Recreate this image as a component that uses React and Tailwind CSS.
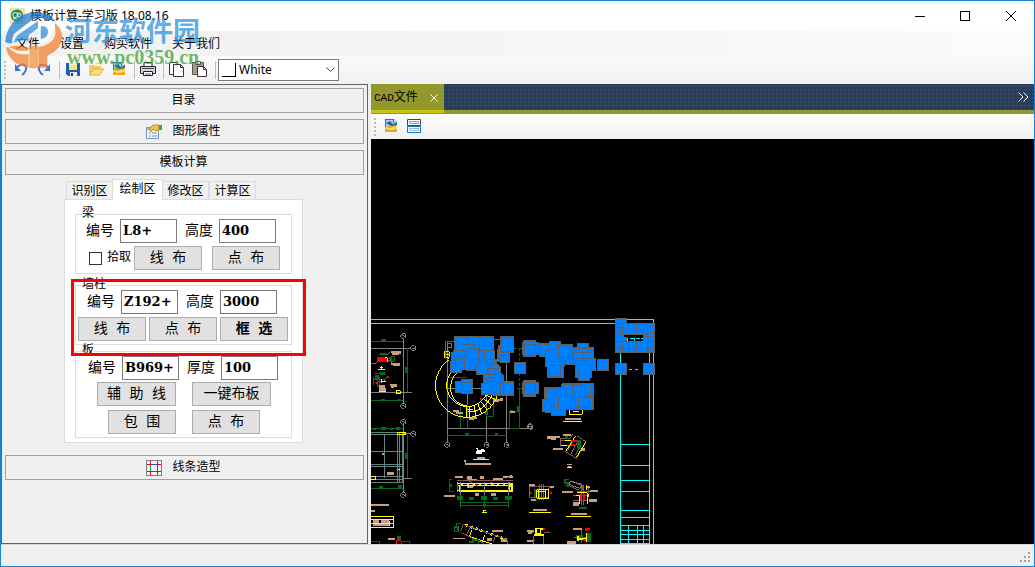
import { useState } from "react";

const menus = ["文件", "设置", "购买软件", "关于我们"];
const tabs = ["识别区", "绘制区", "修改区", "计算区"];

const BLUE = "#007fff";
const EDGE = "#5f5f5f";

// [x, y, w, h]
const columnsLeft = [
  [242, 155, 32, 32], [246, 128, 34, 34], [253, 79, 34, 34],
  [304, 79, 34, 34], [338, 79, 33, 34], [292, 81, 36, 34],
  [336, 84, 34, 60], [282, 104, 34, 34], [250, 121, 36, 32],
  [256, 146, 34, 34], [328, 108, 38, 34], [285, 136, 30, 44],
  [298, 146, 32, 34], [325, 121, 22, 34], [292, 115, 34, 35],
  [345, 123, 30, 32], [352, 150, 22, 34], [360, 163, 26, 34],
  [356, 176, 36, 34], [352, 190, 42, 34], [340, 195, 36, 34],
  [362, 204, 38, 34], [340, 206, 30, 34], [344, 214, 34, 36],
  [336, 222, 34, 28], [370, 222, 34, 34], [378, 232, 30, 22],
  [320, 160, 33, 34], [404, 215, 27, 41], [383, 120, 35, 34],
  [386, 106, 34, 38], [391, 79, 40, 50], [397, 95, 33, 34],
  [398, 82, 32, 36], [256, 214, 30, 34], [274, 208, 33, 43],
  [274, 217, 33, 27], [434, 157, 30, 33],
];

const columnsRight = [
  [0, 138, 28, 20], [0, 79, 41, 50], [6, 82, 34, 44],
  [0, 214, 18, 42], [12, 218, 29, 36],
  [43, 157, 34, 33],
  [67, 97, 48, 36], [72, 91, 36, 48], [75, 104, 32, 34],
  [67, 217, 48, 34], [72, 211, 36, 48], [75, 219, 32, 34],
  [112, 100, 34, 34], [118, 105, 34, 34], [148, 94, 34, 34],
  [136, 122, 34, 34], [150, 120, 34, 46], [138, 156, 56, 14],
  [184, 118, 36, 38], [196, 130, 24, 34], [168, 103, 50, 40],
  [142, 168, 48, 34], [148, 166, 34, 34], [175, 106, 34, 36],
  [232, 100, 34, 34], [220, 112, 60, 38], [220, 126, 34, 38],
  [252, 122, 28, 34], [226, 115, 48, 14], [250, 145, 36, 38],
  [228, 146, 28, 34], [226, 168, 50, 34], [235, 178, 34, 33],
  [292, 148, 34, 33],
  [133, 232, 40, 34], [139, 235, 34, 34], [187, 220, 34, 34],
  [184, 223, 50, 34], [222, 223, 24, 34], [246, 226, 34, 34],
  [257, 226, 14, 34], [127, 268, 34, 38], [136, 274, 34, 34],
  [154, 283, 42, 34], [160, 256, 34, 34], [210, 262, 34, 36],
  [238, 265, 40, 34], [216, 270, 20, 28], [228, 258, 24, 32],
  [236, 264, 34, 28], [176, 258, 34, 42], [190, 224, 28, 34],
];

const columnsFrame = [
  [346, 25, 34, 34], [346, 40, 34, 14], [346, 54, 26, 14],
  [346, 68, 26, 14], [346, 82, 34, 34], [346, 95, 26, 32],
  [346, 117, 26, 10], [436, 40, 27, 30], [430, 68, 33, 14],
  [430, 80, 33, 16], [436, 94, 27, 33], [446, 115, 17, 12],
  [367, 40, 22, 34], [389, 40, 20, 34], [409, 40, 33, 34],
  [367, 94, 22, 33], [389, 94, 20, 33], [409, 94, 33, 33],
  [346, 160, 34, 33], [430, 160, 33, 33],
];

function Columns({ items, back }) {
  return (
    <g fill={BLUE} stroke={EDGE} strokeWidth="3">
      {back && <path d={back} />}
      {items.map(([x, y, w, h], i) => (
        <rect key={i} x={x} y={y} width={w} height={h} />
      ))}
    </g>
  );
}

function Axis({ x, y }) {
  return (
    <g fill="none" stroke="#808080" strokeWidth="3">
      <path d={`M${x - 7} ${y - 4}l4-4h6l4 4v7l-4 4h-6l-4-4z`} />
      <path d={`M${x - 3} ${y}h6v3`} />
    </g>
  );
}

function Drawing() {
  return (
    <svg
      width="663"
      height="405"
      viewBox="371 139 663 405"
      shapeRendering="crispEdges"
      className="block shrink-0"
      aria-label="CAD"
    >
      {/* sheet frame */}
      <g fill="none" stroke="#00ffff">
        <path d="M371 319.5H653.5V544M371 323.5H649.5V544M620.5 323V544" />
        <path d="M620 444.5h29M620 465.5h29M620 480.5h29M620 491.5h29M620 510.5h29M620 517.5h29M620 525.5h29M620 530.5h29M620 534.5h29M620 539.5h29M620 543.5h29M628.5 525v19M637.5 525v19M643.5 525v19" />
        <path d="M629 369.5h12" strokeDasharray="3 3" />
      </g>

      {/* upper left detail and round stair */}
      <g transform="translate(370 310) scale(.33333)" fill="none" strokeWidth="3">
        <g stroke="#808080">
          <path d="M100 83V282M3 115H122M3 247H125M100 340V360M232 95V360M232 235H410M292 235V285M350 235V355M409 250V360M232 355H450" />
        </g>
        <g stroke="#066b1e">
          <path d="M3 94H100M112 115V247M3 271H100M292 203H232M271 290V355H292V290M350 290V320H371V278M420 304V360M430 304h20M26 133h28M22 150h6M12 190h35M20 208h26M12 200v25M62 140h12v16h-14" />
        </g>
        <g fill="#066b1e">
          <path d="M34 88h14v7h-14zM106 170h7v18h-7zM34 266h12v6h-12zM84 266h8v6h-8zM268 305h5v16h-5zM346 304h7v12h-7zM420 300h10v6h-10z" />
          <path d="M30 128h20v8H30zM56 140h10v12H56zM14 194h12v12H14zM30 186h14v8H30z" />
        </g>
        <path d="M22 141h32v14H22z" fill="#ff0000" />
        <path d="M8 208h14v6h10M14 218h10v10M30 200v28" stroke="#ff0000" />
        <path d="M3 160h15l8-10M50 135l10-8M55 150l12 10M40 214l12-14M30 236l-12-18" stroke="#85595f" />
        <g fill="#c8a080">
          <path d="M62 123h30v9h-6v3H66v-6h-4zM62 160h28v9H68v-5h-6zM60 223h20v7h-8v4h-8v-5h-4zM28 225h16v10h4v9H26v-8z" />
          <path d="M370 267h30v5h-14v4h-16zM296 322h26v5h-10v3h-16zM250 301h16v5h12v5h-20v-6h-8zM420 302h16v8h-16z" />
        </g>
        <g stroke="#ffff00">
          <path d="M24 180h22M34 168v12M30 174h10M36 214h12M28 244h20M36 206v12M44 144h8v12" />
          <path d="M79 242h12v10H79zM223 125h15v10h-15zM223 134h15v8h-15zM236 140v8" />
          <path d="M236 150A95 95 0 0 0 290 322A95 95 0 0 0 382 256" />
          <path d="M244 186A64 64 0 0 0 290 290A64 64 0 0 0 350 252M262 188C238 204 232 258 264 278Q276 286 290 288" />
          <path d="M290 288v34M300 290v32M312 288l6 32M324 282l12 30M334 276l18 24M342 266l22 20M348 256l28 12M294 306q50 0 72-50M348 254h34M290 300h20" />
        </g>
        <path d="M226 94v50M232 94h30M360 90h34" stroke="#85595f" />
        <path d="M232 100h14v14h-14" stroke="#55807a" />
        <path d="M330 265h5v5h-5zM52 198h5v5h-5z" fill="#ff0000" stroke="none" />
        <Axis x={100} y={78} />
        <Axis x={130} y={115} />
        <Axis x={100} y={288} />
        <Axis x={100} y={336} />
        <Columns
          items={columnsLeft}
          back="M253 79H371V150H380V170H392V195H400V254H336V226H342V194H322V182H290V178H272V186H242V155H246V128H253z"
        />
      </g>

      {/* plan on the right of the stair */}
      <g transform="translate(500 310) scale(.33333)" fill="none" strokeWidth="3">
        <path d="M19 160V360M28 355H84" stroke="#808080" />
        <path d="M41 115h26M58 115v42" stroke="#066b1e" strokeDasharray="9 6" />
        <path d="M58 190v45" stroke="#066b1e" strokeDasharray="9 6" />
        <path d="M58 235V355H30M51 235h8" stroke="#066b1e" />
        <path d="M51 288h6v14h-6z" fill="#066b1e" />
        <path d="M62 115h6M62 235h6" stroke="#808080" />
        <path d="M0 265h10v5H0zM194 324h48v5h-48z" fill="#c8a080" />
        <path d="M208 300v13h39v-13M218 304h20M190 334h56" stroke="#ffff00" />
        <path d="M382 94v-9h48v9M403 85v9" stroke="#00ffff" strokeDasharray="12 5" />
        <Axis x={91} y={350} />
        <Columns
          items={columnsRight}
          back="M112 100H148V94H182V103H218V156H194V170H138V138H118zM220 112H280V146H286V183H228V164H220zM133 232H187V222H281V298H196V316H154V306H127V268H133z"
        />
        <Columns items={columnsFrame} />
      </g>

      {/* lower left plan, section and notes */}
      <g transform="translate(370 425) scale(.33333)" fill="none" strokeWidth="3">
        <path d="M3 22h98M3 28h98M3 80h98M3 118h98M3 124h98M3 155h98M3 165h98M3 174h98M43 28v130M82 22v150M88 22v150M97 22v150" stroke="#608580" />
        <path d="M100 0V204M101 27H122M101 160H126M232 0V54M350 0V54M410 0V54M232 10H450" stroke="#808080" />
        <path d="M3 12H100M112 30V160M3 192H100M232 31H410M416 10h34M246 165h-8v36h14M271 210V248M343 210V248M415 210V248M271 234H415M271 243H415" stroke="#066b1e" />
        <g fill="#066b1e">
          <path d="M8 8h10v8H8zM34 6h14v9H34zM60 8h10v8H60zM78 6h12v9H78zM106 84h7v18h-7zM28 184h12v8H28zM84 180h12v12H84zM286 24h11v7h-11zM374 24h11v7h-11z" />
          <path d="M262 214h18v10h-18zM298 216h14v8h-14zM334 214h18v10h-18zM370 216h14v8h-14zM406 214h18v10h-18zM338 237h10v7h-10zM238 176h8v10h-8zM80 333h14v14H80z" />
        </g>
        <path d="M84 22h22v8H84zM84 134h6M3 154h14v10H3M340 255v7M337 262h14M340 258h8" stroke="#ffff00" />
        <path d="M310 103h46M3 274h68v33H3M3 284h68M3 296h68" stroke="#ffff00" />
        <path d="M10 290h50M10 301h50" stroke="#ffff00" strokeWidth="6" strokeDasharray="4 8" />
        <path d="M318 70h7v5h8v-4h8v5h4v4h-8v6h-18v-8h4z" fill="#ffffff" />
        <g fill="#c8a080">
          <path d="M320 95h26v6h-26zM282 106h5v8h76v6h-76zM52 142h20v7h-20zM3 236h54v6H3zM3 255h12v6H3zM8 286h20v8H8zM34 286h24v8H34zM10 298h48v6H10zM36 84h7v7h-7z" />
          <path d="M222 211h34v6h-34zM256 154h22v6h-22zM292 154h14v8h14v6h-28zM330 154h12v8h-12zM370 158h28v6h-28zM400 154h28v5h-28zM290 184h20v6h-20zM314 204h14v8h-14zM362 204h16v8h-16z" />
          <path d="M54 338h22v8H54zM366 316h32v6h-32zM250 338h34v5h-34zM352 340h14v8h-14zM392 340h18v12h-18z" />
        </g>
        <path d="M260 166h170M262 172v30M300 166l10 20M360 170l20 14M420 172v30M290 160l10 12" stroke="#85595f" />
        <path d="M260 177h170M264 182h160M262 198h164M268 184v16M420 180v20M292 198v4M268 201h152" stroke="#ffff00" />
        <path d="M272 180h150" stroke="#ffff00" strokeWidth="7" strokeDasharray="8 10" />
        <path d="M343 172v38M271 172v38M415 172v38" stroke="#808080" />
        <path d="M412 155h4v4h-4zM404 215h4v4h-4zM318 178h4v4h-4z" fill="#ff0000" />
        <path d="M278 298L412 344M306 314l-8 20 90 30M344 330l-8 24" stroke="#ffff00" />
        <path d="M286 300L400 340" stroke="#ffff00" strokeWidth="8" strokeDasharray="7 9" />
        <path d="M272 318l8-20 132 46v12M272 322l70 34M300 310l-10 20M376 332l-6 20" stroke="#85595f" />
        <path d="M272 296h-12v10h-6v14h10v-16M296 352h14v-6h16v10" stroke="#066b1e" strokeWidth="5" />
        <path d="M79 356v-9h15v9M3 350h20" stroke="#ff0000" />
        <path d="M3 350h26v8M94 349h25v8" stroke="#066b1e" />
        <Axis x={130} y={27} />
        <Axis x={100} y={210} />
        <Axis x={232} y={60} />
        <Axis x={350} y={60} />
        <Axis x={410} y={60} />
      </g>

      {/* node details */}
      <g transform="translate(510 425) scale(.33333)" fill="none" strokeWidth="3">
        <path d="M0 10h30M30 0v10" stroke="#066b1e" />
        <path d="M30 10h24" stroke="#808080" />
        <g stroke="#85595f">
          <path d="M150 40h30l8-12M150 48h36M152 40v22h30M200 32l28 18-28 50-34-20M192 42l-20 36M204 48l-22 40M214 56l-18 34" />
          <path d="M60 184h56M62 218h54M90 176v50M96 176v50M102 176v50M116 190v30M60 182v36" />
          <path d="M182 168l36 14v14M178 182l30 14M216 180v60M222 180v60M190 212h40M190 228h40M236 184v20M200 200h50" />
          <path d="M72 332v26M101 332v26M60 322h12M101 322h18M192 338h36M216 310v44M60 346h14" />
        </g>
        <g fill="#c8a080">
          <path d="M111 34h38v5h-10v7h-16v-4h-12zM160 27h22v6h-22zM130 68h30v7h-30zM214 70h12v7h-12zM172 116h14v5h-14zM174 122h10v5h-10z" />
          <path d="M56 178h20v6H56zM62 222h16v7H62zM120 184h12v4h-12zM68 253h42v5H68zM156 198h34v6h-34zM228 184h12v6h-12zM236 222h26v10h-26zM190 232h18v10h-18zM240 194h24v6h-24zM184 264h46v6h-46z" />
          <path d="M52 314h20v8H52zM54 318h12v8H54zM52 344h18v6H52zM190 308h26v8h-26zM172 348h26v8h-26zM0 150h6v8H0z" />
        </g>
        <path d="M164 34h10v8h-10zM200 46h12v26h-12zM72 192h8v24h-8zM206 245h26v7h-26zM228 324h14v26h-14zM198 330h20v12h-20zM0 212h6v10H0z" fill="#066b1e" />
        <path d="M178 164h-12v10h8v12M166 182h10" stroke="#066b1e" strokeWidth="5" />
        <path d="M182 168l34 10-6 12-34-12z" stroke="#808080" />
        <path d="M196 34l-28 44M228 50l-28 46M164 46h26M152 62h20M170 127h16M80 194h36v26H80zM86 194v26M108 194v26M82 200h26M57 262h66M168 274h74M230 180v14M200 204h32v34M198 212h12v26M236 208v8" stroke="#ffff00" />
        <path d="M72 330h30M78 310h14v16H78zM94 312h8M202 342h28M230 324v28M204 334v14M0 180h10M0 184h6v16H0" stroke="#ffff00" strokeWidth="4" />
        <path d="M182 48h20M184 61h12M212 206v20M222 206v20M120 204h6M60 204h6M116 186h5M98 312h6M218 346h10M228 310v8M232 312h8" stroke="#ff0000" strokeWidth="5" />
        <Axis x={62} y={6} />
      </g>
    </svg>
  );
}

const Grip = () => (
  <span className="ml-[3px] mr-px flex w-1 shrink-0 flex-col gap-0.5 self-center">
    {[0, 1, 2, 3, 4].map((n) => (
      <i key={n} className="size-0.5 bg-[#bdbdbd]" />
    ))}
  </span>
);

const Sep = () => (
  <span className="ml-1 mr-px h-[18px] w-px shrink-0 self-center bg-[#bdbdbd]" />
);

function ToolButton({ label, children }) {
  return (
    <button aria-label={label} className="flex h-6 w-[23px] shrink-0 items-center justify-center pb-px">
      <svg width="16" height="16" viewBox="0 0 16 16" fill="none">
        {children}
      </svg>
    </button>
  );
}

const PictureIcon = () => (
  <>
    <path d="M2 1h9l3 3v10H2z" fill="#3b6ea5" />
    <path d="M3 2h7v3l3-1v3L8 8 3 9z" fill="#a9d3f2" />
    <path d="M3 5l4-2 3 3 3-1v3L8 8z" fill="#2a62a0" />
    <path d="M2 9l5-1 7-1v7H2z" fill="#e8a91c" />
    <path d="M2 9l5 1 7-2v3l-6 1-6-1z" fill="#fbdc62" />
    <path d="M11 1v3h3z" fill="#d8e9f8" />
  </>
);

function Bar({ children }) {
  return (
    <button className="flex h-[25px] w-full shrink-0 items-center justify-center gap-2.5 border border-[#a0a0a0] bg-[#f0f0f0] pr-0.5 text-xs">
      {children}
    </button>
  );
}

function Field({ id, label, value }) {
  return (
    <>
      <label htmlFor={id} className="mr-1.5 text-sm">
        {label}
      </label>
      <input
        id={id}
        defaultValue={value}
        className="h-6 w-[57px] border border-[#7a7a7a] bg-white pb-px pl-0.5 font-['DejaVu_Serif','Noto_Sans_CJK_SC',serif] text-[13px] font-bold outline-none"
      />
    </>
  );
}

function Push({ wide, bold, children }) {
  return (
    <button
      className={`h-6 border border-[#adadad] bg-[#e1e1e1] text-sm leading-none whitespace-nowrap ${
        wide ? "w-[79px]" : "w-[68px]"
      } ${bold ? "font-bold" : ""}`}
    >
      {children}
    </button>
  );
}

function Group({ title, className, children }) {
  return (
    <fieldset className={`mx-2.5 border border-[#dcdcdc] pb-[3px] ${className}`}>
      <legend className="ml-1.5 h-2.5 text-xs leading-[10px]">{title}</legend>
      {children}
    </fieldset>
  );
}

function Watermark() {
  return (
    <div className="pointer-events-none absolute left-1 top-2.5 flex opacity-75">
      <svg width="58" height="58" viewBox="15 30 174 174" className="shrink-0">
        <path d="M16 124C18 76 56 34 104 34c32 0 54 12 64 30-12-8-22-10-32-8-12-8-30-6-44 4L42 98c-4 8-6 18-6 30z" fill="#1f7fd0" />
        <path d="M42 126c2-14 8-22 20-30l52-36v22l-28 20v18c-14-4-30-2-44 6z" fill="#3391dd" />
        <path d="M114 66c22-6 40 2 42 24 0 20-14 34-40 38V84z" fill="#fff" />
        <path d="M122 76c14-2 22 4 22 16s-8 20-22 22z" fill="#3391dd" />
        <path d="M164 66c18 12 26 32 20 56-8 24-26 34-42 42v36h-26v-62c34-6 52-24 50-48-1-10-1-16-2-24z" fill="#f08430" />
        <path d="M18 140c18-8 44-8 68 0v60C50 194 24 174 18 140z" fill="#f08430" />
        <path d="M22 134c20 16 46 20 68 12v12c-28 6-52-2-68-24z" fill="#fff" />
        <path d="M88 134h28v66c-10 2-18 2-28 0z" fill="#f4933f" />
      </svg>
      <div className="pt-0.5 pl-0.5 font-bold">
        <div className="font-['Noto_Sans_CJK_SC',sans-serif] text-[27px] leading-[34px] text-[#2f95e0]">
          河东软件园
        </div>
        <div className="ml-0.5 font-['Liberation_Serif',serif] text-xl leading-5 text-[#3fa535]">
          www.pc0359.cn
        </div>
      </div>
    </div>
  );
}

export default function App() {
  const [tab, setTab] = useState("绘制区");

  return (
    <div className="relative flex min-h-screen flex-col border border-[#1883d7] bg-[#f0f0f0] font-['Noto_Sans','Noto_Sans_CJK_SC',sans-serif] text-xs text-black">
      <header className="flex h-[30px] shrink-0 items-center bg-white">
        <svg width="16" height="16" viewBox="0 0 16 16" className="ml-2 shrink-0">
          <path d="M1 0h15v13l-3 3H1z" fill="#efdfb8" />
          <circle cx="8" cy="7.500" r="6" fill="#178a4c" />
          <circle cx="6.500" cy="7" r="2.600" fill="none" stroke="#fff" />
          <circle cx="10" cy="7" r="2" fill="none" stroke="#fff" />
          <path d="M4 10q5 3 8 0" fill="none" stroke="#fff" />
        </svg>
        <h1 className="ml-[5px] flex-1 whitespace-nowrap">模板计算-学习版 18.08.16</h1>
        <button aria-label="最小化" className="flex h-full w-[45px] items-center justify-center">
          <i className="h-px w-2.5 bg-black" />
        </button>
        <button aria-label="最大化" className="flex h-full w-[46px] items-center justify-center">
          <i className="size-2.5 border border-black" />
        </button>
        <button aria-label="关闭" className="flex h-full w-[46px] items-center justify-center">
          <svg width="10" height="10" viewBox="0 0 10 10" stroke="#000">
            <path d="M0 0l10 10M10 0L0 10" />
          </svg>
        </button>
      </header>

      <nav className="flex h-[25px] shrink-0 items-center gap-5 bg-gradient-to-r from-[#f0f0f0] to-[#fbfbfb] pl-[15px]">
        {menus.map((m) => (
          <button key={m}>{m}</button>
        ))}
      </nav>

      <div className="flex h-7 shrink-0 items-center bg-gradient-to-b from-[#fbfbfb] to-[#f0f0f0] pb-px">
        <Grip />
        <ToolButton label="撤销">
          <path d="M4 6q7-5 9 0 1 4-4 8" stroke="#3f73d8" strokeWidth="2" />
          <path d="M2 3v7h6z" fill="#3f73d8" />
        </ToolButton>
        <ToolButton label="重做">
          <path d="M12 6Q5 1 3 6q-1 4 4 8" stroke="#3f73d8" strokeWidth="2" />
          <path d="M14 3v7H8z" fill="#3f73d8" />
        </ToolButton>
        <Sep />
        <ToolButton label="保存">
          <path d="M1 2h14v13H3l-2-2z" fill="#1f5fae" />
          <path d="M4 2h8v7H4z" fill="#f8e37a" />
          <path d="M4 2h8v2H4z" fill="#fdf6c4" />
          <path d="M5 11h7v4H5z" fill="#e8f1fa" />
          <path d="M6 12h2v3H6z" fill="#143f7a" />
        </ToolButton>
        <ToolButton label="打开">
          <path d="M1 14V4h5l1 1h6v3H5z" fill="#f2cc5c" />
          <path d="M1.500 14l4-6h10l-4 6z" fill="#fce08a" stroke="#e0a830" />
          <path d="M8 3l5-2v3" stroke="#e9b93c" />
        </ToolButton>
        <ToolButton label="图片">
          <PictureIcon />
        </ToolButton>
        <Sep />
        <ToolButton label="打印">
          <path d="M4 5.500V1.500h8v4" fill="#fff" stroke="#222" />
          <path d="M.5 5.500h15v7H.5z" fill="#d8d8d8" stroke="#222" />
          <path d="M2 7h12v1H2z" fill="#444" />
          <path d="M3.500 10.500h9v4h-9z" fill="#fff" stroke="#222" />
          <path d="M5 12h6v2H5z" fill="#8fb6e8" />
        </ToolButton>
        <Sep />
        <ToolButton label="复制">
          <path d="M.5 1.500h7l2 2v10h-9z" fill="#fff" stroke="#333" />
          <path d="M4.500 3.500h7l3 3v9h-10z" fill="#fff" stroke="#333" />
          <path d="M11.500 3.500v3h3" stroke="#333" />
        </ToolButton>
        <ToolButton label="粘贴">
          <path d="M.5 1.500h11v12H.5z" fill="#a89a86" stroke="#555" />
          <path d="M3.500.5h5v3h-5z" fill="#e8e8e8" stroke="#555" />
          <path d="M5.500 5.500h6l3 3v7h-9z" fill="#fff" stroke="#333" />
          <path d="M11.500 5.500v3h3" stroke="#333" />
        </ToolButton>
        <Sep />
        <div className="relative ml-px">
          <select
            aria-label="颜色"
            className="block h-[22px] w-[121px] appearance-none border border-[#7a7a7a] bg-white pl-5 text-xs outline-none"
          >
            <option>White</option>
          </select>
          <i className="absolute left-1 top-1 size-[14px] border-b border-r border-black bg-white" />
          <svg width="9" height="6" viewBox="0 0 9 6" className="absolute right-1 top-2" fill="none" stroke="#444">
            <path d="M.5.5l4 4 4-4" />
          </svg>
        </div>
      </div>

      <main className="flex flex-1 font-['Liberation_Mono','Noto_Sans_CJK_SC',monospace]">
        <aside className="flex w-[367px] shrink-0 flex-col gap-1.5 border border-[#646464] p-[3px]">
          <Bar>目录</Bar>
          <Bar>
            <svg width="16" height="16" viewBox="0 0 16 16">
              <path d="M.5 3.500h12v11H.5z" fill="#f4f8ff" stroke="#7c93bd" />
              <path d="M1 4h11v2H1z" fill="#9db7e4" />
              <path d="M3 9h2M6 9h5M3 12h2M6 12h5" stroke="#6f88b8" />
              <path d="M3 5l4-4 6 0v5L9 7 7 5 5 8z" fill="#f0c040" stroke="#8a6a20" strokeWidth=".6" />
              <path d="M13 1h3v5h-3z" fill="#4d9a52" />
            </svg>
            图形属性
          </Bar>
          <Bar>模板计算</Bar>

          <div className="-mt-0.5 flex justify-center pr-0.5">
            <section className="relative w-[239px]">
              <div role="tablist" className="flex h-5 items-end pl-0.5">
                {tabs.map((t) => (
                  <button
                    key={t}
                    role="tab"
                    aria-selected={t === tab}
                    onClick={() => setTab(t)}
                    className={
                      t === tab
                        ? "relative z-10 -mx-px -mb-px h-[21px] w-[51px] border border-b-0 border-[#dcdcdc] bg-white leading-5"
                        : "h-[18px] w-[47px] border border-b-0 border-[#dcdcdc] bg-[#f0f0f0] leading-5"
                    }
                  >
                    {t}
                  </button>
                ))}
              </div>

              <div className="border border-[#dcdcdc] bg-white pb-1 pt-[9px]">
                <Group title="梁">
                  <div className="flex items-center pl-2.5">
                    <Field id="beam-no" label="编号" value="L8+" />
                    <span className="w-2" />
                    <Field id="beam-h" label="高度" value="400" />
                  </div>
                  <div className="mt-[3px] flex items-center pl-[13px]">
                    <input
                      id="pick"
                      type="checkbox"
                      className="size-[13px] appearance-none border border-[#333] bg-white checked:bg-[#333]"
                    />
                    <label htmlFor="pick" className="ml-[5px] mr-[3px]">
                      拾取
                    </label>
                    <Push>线 布</Push>
                    <span className="w-2.5" />
                    <Push>点 布</Push>
                  </div>
                </Group>

                <Group title="墙柱" className="mt-1.5">
                  <div className="flex items-center pl-[11px]">
                    <Field id="wall-no" label="编号" value="Z192+" />
                    <span className="w-2" />
                    <Field id="wall-h" label="高度" value="3000" />
                  </div>
                  <div className="mt-[3px] flex gap-[3px] pl-0.5">
                    <Push>线 布</Push>
                    <Push>点 布</Push>
                    <Push bold>框 选</Push>
                  </div>
                </Group>

                <Group title="板" className="mt-px">
                  <div className="flex items-center pl-3">
                    <Field id="slab-no" label="编号" value="B969+" />
                    <span className="w-2" />
                    <Field id="slab-t" label="厚度" value="100" />
                  </div>
                  <div className="mt-0.5 flex gap-4 pl-[21px]">
                    <Push wide>辅 助 线</Push>
                    <Push wide>一键布板</Push>
                  </div>
                  <div className="mt-1 flex gap-4 pl-8">
                    <Push>包 围</Push>
                    <Push>点 布</Push>
                  </div>
                </Group>
              </div>

              {/* highlight around the wall/column group */}
              <div className="pointer-events-none absolute -right-[3px] left-[7px] top-[100px] z-20 h-[77px] border-3 border-[#ff0000]" />
            </section>
          </div>

          <div className="mt-1.5">
            <Bar>
              <svg width="16" height="16" viewBox="0 0 16 16" fill="none" shapeRendering="crispEdges">
                <path d="M.5.5h15v15H.5z" fill="#f4f4f4" stroke="#808080" />
                <path d="M4.500 1v14M11.500 1v14M1 4.500h14M1 11.500h14" stroke="#ff0000" />
                <path d="M5 4.500h6M5 11.500h6M11.500 5v6" stroke="#2f49d8" />
                <path d="M4.500 5v6" stroke="#1ca04c" />
              </svg>
              线条造型
            </Bar>
          </div>
        </aside>

        <section className="ml-[3px] flex min-w-0 flex-1 flex-col">
          <div className="flex h-[30px] shrink-0 items-stretch border-b-4 border-[#92982b] bg-[#2b3c59] bg-[radial-gradient(#33476a_1px,transparent_1px)] bg-[size:4px_4px]">
            <div className="-mb-[3px] flex w-[73px] items-center border-b-3 border-[#c9c410] bg-[#92982b] pl-[3px] pt-0.5">
              <span className="text-[11px]">CAD</span>
              <span>文件</span>
              <button aria-label="关闭 CAD文件" className="ml-3 p-0">
                <svg width="8" height="8" viewBox="0 0 8 8" stroke="#fff">
                  <path d="M.5.5l7 7M7.500.5l-7 7" />
                </svg>
              </button>
            </div>
            <button aria-label="更多" className="ml-auto mr-[5px]">
              <svg width="11" height="10" viewBox="0 0 11 10" fill="none" stroke="#fff">
                <path d="M.5.5L5 5 .5 9.500M5.500.5L10 5l-4.500 4.500" />
              </svg>
            </button>
          </div>

          <div className="flex h-[25px] shrink-0 items-center bg-gradient-to-b from-[#fdfdfd] to-[#f0f0f0]">
            <Grip />
            <ToolButton label="图片">
              <PictureIcon />
            </ToolButton>
            <ToolButton label="布局">
              <path d="M1.500 1.500h13v6h-13z" fill="#fff" stroke="#444" />
              <path d="M1.500 8.500h13v6h-13z" fill="#fff" stroke="#1272c4" />
              <path d="M3.500 3.500h9v2h-9z" stroke="#999" />
              <path d="M3.500 10.500h9v2h-9z" stroke="#8dbbe0" />
            </ToolButton>
          </div>

          <div className="flex flex-1 overflow-hidden bg-black">
            <Drawing />
          </div>
        </section>
      </main>

      <footer className="flex h-[22px] shrink-0 items-end justify-end border-t border-[#d7d7d7] p-[3px]">
        <svg width="11" height="11" viewBox="0 0 11 11" fill="#a0a0a0">
          <path d="M8 0h2v2H8zM4 4h2v2H4zM8 4h2v2H8zM0 8h2v2H0zM4 8h2v2H4zM8 8h2v2H8z" />
        </svg>
      </footer>

      <Watermark />
    </div>
  );
}
